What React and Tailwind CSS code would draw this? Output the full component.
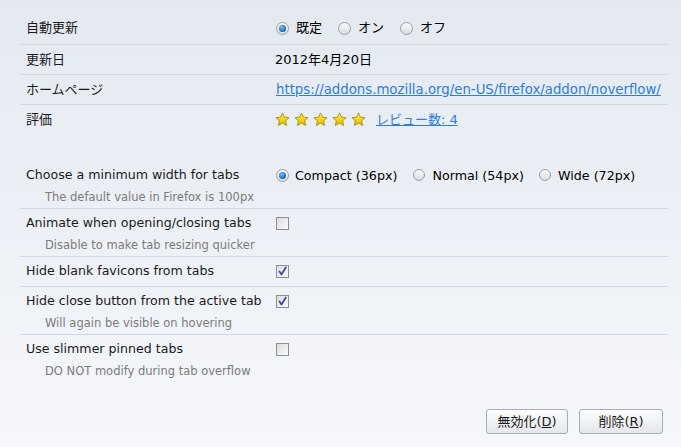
import React from "react";

const FONT = { fontFamily: '"DejaVu Sans", "Noto Sans CJK JP", sans-serif' };

function Radio({ checked, small }) {
  return (
    <span
      className={`relative inline-flex ${small ? "h-[12px] w-[12px]" : "h-[13px] w-[13px]"} shrink-0 items-center justify-center rounded-full border border-[#9a9fa6] bg-gradient-to-b from-[#fbfbfb] to-[#d9dce0]`}
    >
      {checked && (
        <span className="h-[7px] w-[7px] rounded-full bg-[radial-gradient(circle_at_40%_35%,#7fc3f0_0%,#2577c4_55%,#0d3f7a_100%)]" />
      )}
    </span>
  );
}

function Check({ checked }) {
  return (
    <span className="relative inline-flex h-[13px] w-[13px] shrink-0 items-center justify-center border border-[#8e8f91] bg-gradient-to-br from-[#dcdcdc] to-[#fbfbfb]">
      {checked && (
        <svg width="11" height="11" viewBox="0 0 11 11" className="absolute left-[0px] top-[0px]">
          <path d="M2.5 5.5 L4.5 8.5 L8.8 1.5" fill="none" stroke="#3d4f9f" strokeWidth="1.8" strokeLinejoin="round" strokeLinecap="round" />
        </svg>
      )}
    </span>
  );
}

function Star() {
  return (
    <svg width="15" height="15" viewBox="0 0 24 24" className="shrink-0">
      <defs>
        <linearGradient id="sg" x1="0" y1="0" x2="0" y2="1">
          <stop offset="0" stopColor="#fff37a" />
          <stop offset="0.6" stopColor="#f3d200" />
          <stop offset="1" stopColor="#e0b400" />
        </linearGradient>
      </defs>
      <path
        d="M12 1.5 L15.1 8.3 L22.5 9.1 L17 14.1 L18.6 21.5 L12 17.7 L5.4 21.5 L7 14.1 L1.5 9.1 L8.9 8.3 Z"
        fill="url(#sg)"
        stroke="#a88a10"
        strokeWidth="1.4"
        strokeLinejoin="round"
      />
    </svg>
  );
}

function InfoRow({ label, children, h = "h-[30px]", border = true }) {
  return (
    <div className={`flex ${h} items-center ${border ? "border-b border-[#d3d8e0]" : ""}`}>
      <div className="w-[256px] shrink-0 pl-[6px] text-[#1b1b1b]">{label}</div>
      <div className="flex items-center">{children}</div>
    </div>
  );
}

function PrefRow({ label, desc, control, border = true }) {
  return (
    <div className={`${border ? "border-b border-[#d3d8e0]" : ""}`}>
      <div className="flex h-[29px] items-center">
        <div className="w-[256px] shrink-0 pl-[6px] text-[12.6px] text-[#1b1b1b]">{label}</div>
        <div className="flex items-center">{control}</div>
      </div>
      {desc && (
        <div className="h-[18px] pb-[3px] pl-[25px] text-[11.5px] leading-[15px] text-[#7c7c7c]">{desc}</div>
      )}
    </div>
  );
}

export default function App() {
  return (
    <div
      className="h-[447px] w-[681px] overflow-hidden bg-gradient-to-b from-[#e4e9f1] to-[#f5f7fa] text-[13px]"
      style={FONT}
    >
      <div className="ml-[20px] mr-[13px] pt-[12px]">
        <InfoRow label="自動更新" h="h-[33px]">
          <Radio checked />
          <span className="ml-[7px] mr-[16px]">既定</span>
          <Radio />
          <span className="ml-[7px] mr-[16px]">オン</span>
          <Radio />
          <span className="ml-[7px]">オフ</span>
        </InfoRow>
        <InfoRow label="更新日">
          <span className="-ml-[1px]">2012年4月20日</span>
        </InfoRow>
        <InfoRow label="ホームページ">
          <a className="text-[13.3px] text-[#2d7fd8] underline" href="#">
            https://addons.mozilla.org/en-US/firefox/addon/noverflow/
          </a>
        </InfoRow>
        <InfoRow label="評価" h="h-[29px]" border={false}>
          <div className="-ml-[1px] flex gap-[4px]">
            <Star />
            <Star />
            <Star />
            <Star />
            <Star />
          </div>
          <a className="ml-[10px] text-[#2d7fd8] underline" href="#">
            レビュー数: 4
          </a>
        </InfoRow>

        <div className="mt-[27px]">
          <PrefRow
            label="Choose a minimum width for tabs"
            desc="The default value in Firefox is 100px"
            control={
              <div className="flex items-center text-[12.7px]">
                <Radio checked />
                <span className="ml-[6px] mr-[16px]">Compact (36px)</span>
                <Radio small />
                <span className="ml-[7px] mr-[15px]">Normal (54px)</span>
                <Radio small />
                <span className="ml-[7px]">Wide (72px)</span>
              </div>
            }
          />
          <PrefRow
            label="Animate when opening/closing tabs"
            desc="Disable to make tab resizing quicker"
            control={<Check />}
          />
          <PrefRow label="Hide blank favicons from tabs" control={<Check checked />} />
          <PrefRow
            label="Hide close button from the active tab"
            desc="Will again be visible on hovering"
            control={<Check checked />}
          />
          <PrefRow
            label="Use slimmer pinned tabs"
            desc="DO NOT modify during tab overflow"
            control={<Check />}
            border={false}
          />
        </div>

        <div className="mt-[27px] flex justify-end gap-[11px] pr-[5px]">
          <button className="h-[25px] w-[82px] rounded-[3px] border border-[#a6aebb] bg-gradient-to-b from-[#fdfdfd] to-[#e4e6ea] text-[13px] text-[#1b1b1b]">
            無効化(<span className="underline">D</span>)
          </button>
          <button className="h-[25px] w-[84px] rounded-[3px] border border-[#a6aebb] bg-gradient-to-b from-[#fdfdfd] to-[#e4e6ea] text-[13px] text-[#1b1b1b]">
            削除(<span className="underline">R</span>)
          </button>
        </div>
      </div>
    </div>
  );
}
